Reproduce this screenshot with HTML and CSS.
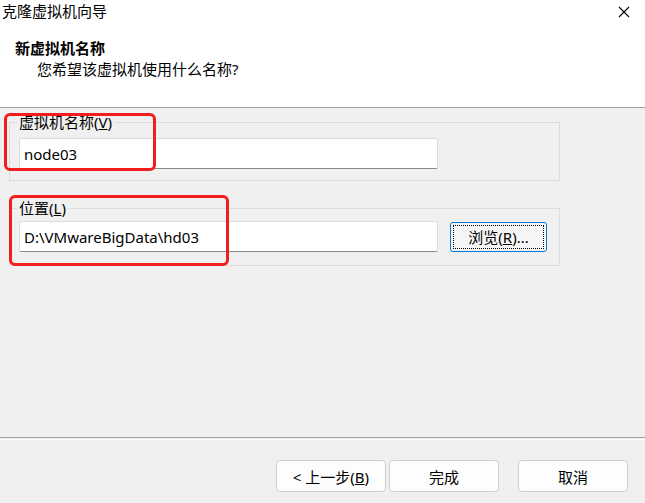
FILE: index.html
```html
<!DOCTYPE html>
<html lang="zh-CN">
<head>
  <meta charset="UTF-8">
  <meta name="viewport" content="width=device-width, initial-scale=1.0">
  <title>克隆虚拟机向导</title>
  <link rel="stylesheet" href="styles.css">
</head>
<body>
  <div class="wizard">
    <div class="top">
      <div class="titlebar">
        <span class="title">克隆虚拟机向导</span>
        <span class="close">
          <svg width="12" height="12" viewBox="0 0 12 12">
            <path d="M1 1 L11 11 M11 1 L1 11" stroke="#000" stroke-width="1.1" fill="none"/>
          </svg>
        </span>
      </div>
      <div class="heading">
        <div class="heading-title">新虚拟机名称</div>
        <div class="heading-sub">您希望该虚拟机使用什么名称?</div>
      </div>
    </div>

    <div class="body">
      <fieldset class="group">
        <legend>虚拟机名称(<u>V</u>)</legend>
        <div class="row">
          <input class="field" type="text" value="node03">
        </div>
      </fieldset>

      <fieldset class="group group-location">
        <legend>位置(<u>L</u>)</legend>
        <div class="row">
          <input class="field" type="text" value="D:\VMwareBigData\hd03">
          <button class="btn btn-browse"><span class="focus">浏览(<u>R</u>)...</span></button>
        </div>
      </fieldset>
    </div>

    <div class="footer">
      <div class="separator"></div>
      <div class="actions">
        <button class="btn">&lt; 上一步(<u>B</u>)</button>
        <button class="btn">完成</button>
        <button class="btn btn-cancel">取消</button>
      </div>
    </div>

    <!-- annotation marks -->
    <div class="mark mark-name"></div>
    <div class="mark mark-location"></div>
  </div>
</body>
</html>
```

FILE: styles.css
```css
body {
  margin: 0;
  background: #f0f0f0;
  font-family: "Noto Sans", "Noto Sans CJK SC", sans-serif;
  font-size: 15px;
  color: #000;
}

.wizard {
  position: relative;
  width: 645px;
  height: 503px;
  display: flex;
  flex-direction: column;
  overflow: hidden;
}

.top {
  background: #fff;
  height: 108px;
  border-bottom: 1px solid #a0a0a0;
  box-sizing: border-box;
}

.titlebar {
  display: flex;
  justify-content: space-between;
  align-items: center;
  height: 23px;
  padding-left: 2px;
  padding-right: 15px;
}

.title {
  line-height: 23px;
}

.close {
  display: flex;
  align-items: center;
}

.heading {
  padding: 14px 0 0 15px;
}

.heading-title {
  font-weight: bold;
  line-height: 22px;
}

.heading-sub {
  padding-left: 22px;
  line-height: 20px;
}

.body {
  flex: 1;
  padding: 5px 85px 0 9px;
}

.group {
  margin: 0;
  padding: 7px 9px 11px 9px;
  border: 1px solid #dcdcdc;
}

.group legend {
  padding: 0 2px;
  margin-left: -2px;
  line-height: 18px;
}

.group-location {
  margin-top: 18px;
  padding-top: 4px;
  padding-bottom: 13px;
}

.row {
  display: flex;
  align-items: center;
  gap: 12px;
}

.field {
  width: 419px;
  height: 31px;
  box-sizing: border-box;
  margin: 0;
  padding: 0 4px;
  border: 1px solid #dcdcdc;
  border-bottom-color: #8a8a8a;
  border-radius: 2px;
  background: #fff;
  font: inherit;
  color: #000;
}

.btn {
  width: 110px;
  height: 32px;
  box-sizing: border-box;
  margin: 0;
  padding: 0;
  border: 1px solid #d0d0d0;
  border-radius: 4px;
  background: #fdfdfd;
  font: inherit;
  color: #000;
}

.btn-browse {
  width: 97px;
  height: 30px;
  padding: 2px;
  border-color: #0078d7;
  border-radius: 3px;
  background: #f6f6f6;
}

.btn-browse .focus {
  display: flex;
  align-items: center;
  justify-content: center;
  height: 100%;
  border: 1px dotted #000;
  box-sizing: border-box;
}

.footer {
  height: 66px;
}

.separator {
  height: 1px;
  border-top: 1px solid #a0a0a0;
  border-bottom: 1px solid #fff;
}

.actions {
  display: flex;
  justify-content: flex-end;
  gap: 3px;
  padding: 20px 17px 0 0;
}

.btn-cancel {
  margin-left: 16px;
}

.mark {
  position: absolute;
  border: 3px solid #f21d1d;
  border-radius: 6px;
  box-sizing: border-box;
}

.mark-name {
  left: 4px;
  top: 113px;
  width: 152px;
  height: 58px;
}

.mark-location {
  left: 9px;
  top: 195px;
  width: 220px;
  height: 71px;
}
```
